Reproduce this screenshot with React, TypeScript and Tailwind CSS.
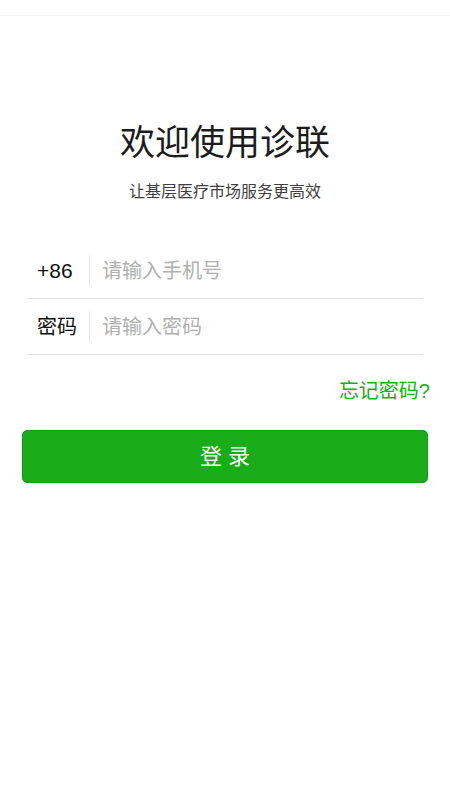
import React, { useState } from 'react';

const FONT = { fontFamily: '"Liberation Sans", "Noto Sans CJK SC", sans-serif' };

export default function App() {
  const [phone, setPhone] = useState('');
  const [password, setPassword] = useState('');

  return (
    <div className="w-[450px] h-[800px] bg-white flex flex-col" style={FONT}>
      {/* 顶部状态栏 */}
      <div className="h-4 shrink-0 border-b border-[#f1f3f7]" />

      <div className="mt-[106px] text-center text-[35px] leading-[42px] text-[#1c1c1c]">欢迎使用诊联</div>
      <div className="mt-[16px] text-center text-[16px] leading-6 text-[#404040]">让基层医疗市场服务更高效</div>

      {/* 表单 */}
      <div className="mt-[39px] mx-[27px]">
        <div className="h-[56px] flex items-center border-b border-[#e3e3e3]">
          <div className="w-[62px] pl-[10px] text-[21px] text-[#111]">+86</div>
          <div className="w-px h-[31px] bg-[#e6e6e6]" />
          <input
            value={phone}
            onChange={e => setPhone(e.target.value)}
            placeholder="请输入手机号"
            className="flex-1 min-w-0 pl-[12px] text-[20px] outline-none placeholder:text-[#b0b0b0] bg-transparent"
          />
        </div>
        <div className="h-[56px] flex items-center border-b border-[#e3e3e3]">
          <div className="w-[62px] pl-[10px] text-[20px] text-[#111]">密码</div>
          <div className="w-px h-[31px] bg-[#e6e6e6]" />
          <input
            type="password"
            value={password}
            onChange={e => setPassword(e.target.value)}
            placeholder="请输入密码"
            className="flex-1 min-w-0 pl-[12px] text-[20px] outline-none placeholder:text-[#b0b0b0] bg-transparent"
          />
        </div>
      </div>

      <div className="mt-[24px] pr-[20px] text-right text-[20px] leading-6 text-[#1aad19]">忘记密码?</div>

      <button className="mt-[27px] mx-[22px] h-[53px] rounded-[5px] bg-[#18ad18] border border-[#139d13] text-white text-[22px]">
        登 录
      </button>
    </div>
  );
}
